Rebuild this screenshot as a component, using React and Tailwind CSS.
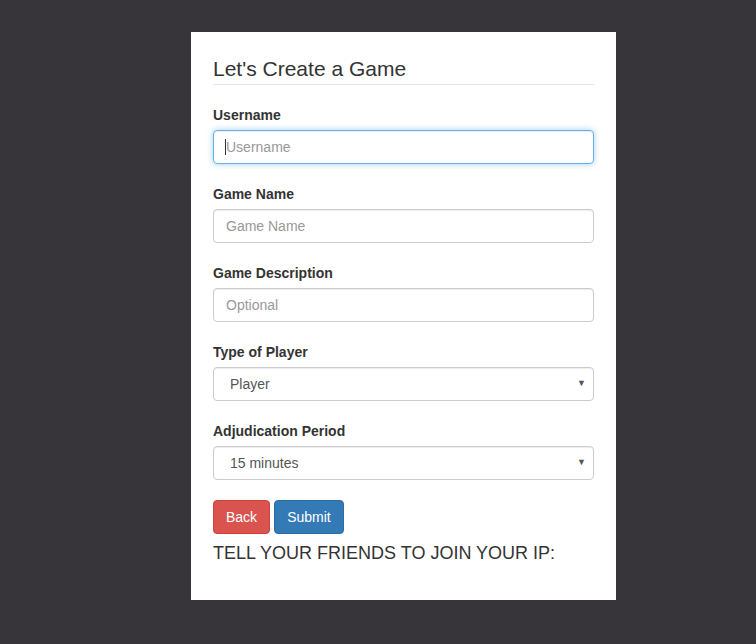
import React from "react";

const font = { fontFamily: '"Liberation Sans", Arial, sans-serif' };

function Field({ label, children }) {
  return (
    <div className="mb-5">
      <label className="block mb-[5px] text-[14px] leading-5 font-bold text-[#333]">
        {label}
      </label>
      {children}
    </div>
  );
}

function Select({ value }) {
  return (
    <div className="relative">
      <div className="h-[34px] w-full rounded border border-[#ccc] bg-white pl-4 text-[14px] leading-[32px] text-[#555] shadow-[inset_0_1px_1px_rgba(0,0,0,0.075)]">
        {value}
      </div>
      <span className="absolute right-[8px] top-[10px] text-[9px] text-[#555]">▼</span>
    </div>
  );
}

export default function App() {
  return (
    <div className="min-h-[644px] bg-[#37353a] pt-8" style={font}>
      <div className="ml-[191px] w-[425px] h-[568px] bg-white px-[22px] pt-[22px]">
        <h3 className="text-[21px] leading-[28px] text-[#333] pt-[1px]">Let's Create a Game</h3>
        <div className="mt-px mb-5 h-px bg-[#e5e5e5]" />

        <Field label="Username">
          <div className="relative">
            <input
              placeholder="Username"
              className="h-[34px] w-full rounded border border-[#66afe9] px-3 text-[14px] text-[#555] outline-none placeholder:text-[#999] shadow-[inset_0_1px_1px_rgba(0,0,0,0.075),0_0_6px_rgba(102,175,233,0.6)]"
            />
            <span className="absolute left-[12px] top-[9px] h-4 w-px bg-[#333]" />
          </div>
        </Field>

        <Field label="Game Name">
          <input
            placeholder="Game Name"
            className="h-[34px] w-full rounded border border-[#ccc] px-3 text-[14px] text-[#555] outline-none placeholder:text-[#999] shadow-[inset_0_1px_1px_rgba(0,0,0,0.075)]"
          />
        </Field>

        <Field label="Game Description">
          <input
            placeholder="Optional"
            className="h-[34px] w-full rounded border border-[#ccc] px-3 text-[14px] text-[#555] outline-none placeholder:text-[#999] shadow-[inset_0_1px_1px_rgba(0,0,0,0.075)]"
          />
        </Field>

        <Field label="Type of Player">
          <Select value="Player" />
        </Field>

        <Field label="Adjudication Period">
          <Select value="15 minutes" />
        </Field>

        <div className="flex gap-1">
          <button className="h-[34px] rounded border border-[#d43f3a] bg-[#d9534f] px-3 text-[14px] text-white">
            Back
          </button>
          <button className="h-[34px] rounded border border-[#2e6da4] bg-[#337ab7] px-3 text-[14px] text-white">
            Submit
          </button>
        </div>
        <p className="mt-[7px] text-[18px] leading-[24px] text-[#333]">
          TELL YOUR FRIENDS TO JOIN YOUR IP:
        </p>
      </div>
    </div>
  );
}
